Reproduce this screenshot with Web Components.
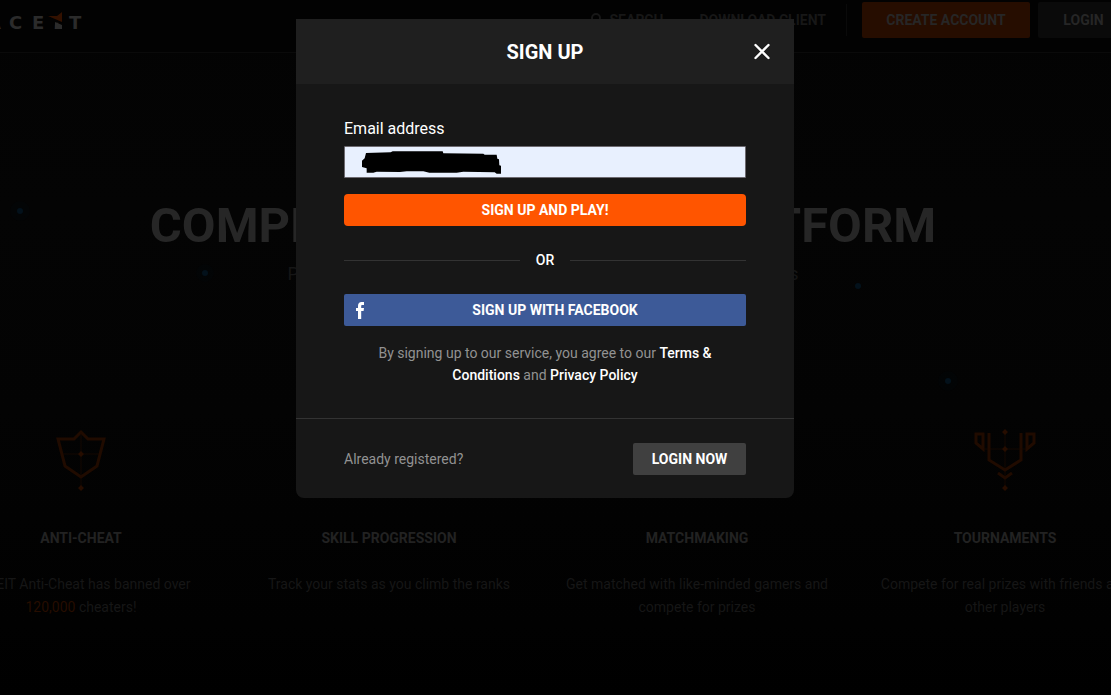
<!DOCTYPE html>
<html lang="en">
<head>
<meta charset="utf-8">
<meta name="viewport" content="width=device-width, initial-scale=1">
<title>FACEIT - Sign up</title>
<style>
  html, body { margin: 0; height: 100%; background: #010101; }
  body { font-family: Roboto, "Liberation Sans", sans-serif; font-size: 14px; color: #fff; overflow: hidden; }
</style>
</head>
<body>
<landing-page>
  <site-header slot="header"></site-header>
  <hero-banner slot="hero" heading="COMPETITIVE GAMING PLATFORM">Play CS:GO, PUBG, Dota 2 and more in leagues and tournaments</hero-banner>
  <feature-card icon="shield" heading="ANTI-CHEAT">FACEIT Anti-Cheat has banned over <em>120,000</em> cheaters!</feature-card>
  <feature-card icon="skill" heading="SKILL PROGRESSION">Track your stats as you climb the ranks</feature-card>
  <feature-card icon="match" heading="MATCHMAKING">Get matched with like-minded gamers and compete for prizes</feature-card>
  <feature-card icon="trophy" heading="TOURNAMENTS">Compete for real prizes with friends and other players</feature-card>
</landing-page>
<modal-dialog heading="SIGN UP">
  <signup-form></signup-form>
  <span slot="note">Already registered?</span>
  <action-button slot="action" kind="grey">LOGIN NOW</action-button>
</modal-dialog>

<script>
const define = (name, render) => customElements.define(name, class extends HTMLElement {
  constructor() {
    super();
    this.attachShadow({ mode: 'open' });
  }
  connectedCallback() {
    const t = document.createElement('template');
    t.innerHTML = '<style>*{box-sizing:border-box}</style>' + render(this);
    this.shadowRoot.replaceChildren(t.content.cloneNode(true));
  }
});

define('action-button', el => `
  <style>
    :host { display: block; }
    button { position: relative; display: block; width: 100%; height: 32px; padding: 0 16px; border: 0;
      border-radius: 2px; background: #404040; color: #fff; font: 700 14px/32px Roboto, "Liberation Sans", sans-serif;
      white-space: nowrap; cursor: pointer; }
    :host([kind=orange]) button { background: #ff5500; border-radius: 4px; }
    :host([kind=facebook]) button { background: #3d5a98; padding: 0 16px 0 36px; }
    :host([kind=dim-orange]) button { background: #260d00; color: #262626; height: 36px; padding: 0 24px; }
    :host([kind=dim]) button { background: #0a0a0a; color: #262626; height: 36px; padding: 0 24px; }
    ::slotted(svg) { position: absolute; left: 12px; top: 8px; }
  </style>
  <button type="button"><slot name="icon"></slot><slot></slot></button>`);

define('site-header', () => `
  <style>
    :host { display: block; border-bottom: 1px solid #0a0a0a; background: #020202; overflow: hidden; }
    header { display: flex; align-items: center; padding: 2px 0 14px; margin: 0 -18px 0 -38px; }
    .logo { display: block; margin-right: auto; }
    nav { display: flex; align-items: center; }
    nav a { display: flex; align-items: center; gap: 8px; margin-right: 36px; color: #171717; font-weight: 700; text-decoration: none; white-space: nowrap; }
    nav a + a { margin-right: 20px; }
    .rule { width: 1px; height: 32px; background: #0a0a0a; margin-right: 15px; }
    .create { width: 168px; margin-right: 8px; }
    .login { width: 91px; }
    svg { display: block; }
  </style>
  <header>
    <a class="logo" href="#" aria-label="FACEIT home">
      <svg width="124" height="36" viewBox="0 0 124 36">
        <text x="4 25 47 70 91 107" y="27" font-family="DejaVu Sans, sans-serif" font-weight="700" font-size="18" fill="#2b2b2b">FACEIT</text>
        <path d="M85 11h16v9l-8 1-1 7h-3V16z" fill="#020202"/>
        <path d="M86 14h9l5-4v10z" fill="#331100"/>
        <path d="M93 20l7 3v4h-7z" fill="#2b2b2b"/>
      </svg>
    </a>
    <nav>
      <a href="#">
        <svg width="12" height="16" viewBox="0 0 12 16" fill="none" stroke="#171717" stroke-width="2"><circle cx="6" cy="6" r="4"/><path d="M8 9l3 5"/></svg>
        SEARCH</a>
      <a href="#">DOWNLOAD CLIENT</a>
    </nav>
    <span class="rule"></span>
    <action-button class="create" kind="dim-orange">CREATE ACCOUNT</action-button>
    <action-button class="login" kind="dim">LOGIN</action-button>
  </header>`);

define('hero-banner', el => `
  <style>
    :host { display: block; text-align: center; }
    h1 { margin: 0 -100px; font-size: 49px; line-height: 56px; font-weight: 700; color: #262626; white-space: nowrap; }
    p { margin: 8px 0 0; font-size: 18px; line-height: 24px; color: #161616; white-space: nowrap; }
  </style>
  <h1>${el.getAttribute('heading')}</h1>
  <p><slot></slot></p>`);

const ICONS = {
  shield: '<path stroke-width="3" d="M9 11h16l7-7 7 7h16l-7 27-16 11-16-11z"/><path stroke-width="1" opacity=".6" d="M32 4v54M14 26h36"/><path fill="#260d00" stroke="none" d="M32 23l3 3-3 3-3-3zM32 57l3 3-3 3-3-3z"/>',
  skill: '<path stroke-width="3" d="M14 40l18-16 18 16M14 54l18-16 18 16"/><path stroke-width="1" d="M32 4v20"/>',
  match: '<circle cx="32" cy="32" r="22" stroke-width="3"/><path stroke-width="1" d="M32 4v56M4 32h56"/>',
  trophy: '<path stroke-width="3" d="M16 5v27l16 10 16-10V5"/><path stroke-width="3" d="M3 6h7v15l-7-6zM61 6h-7v15l7-6z"/><path stroke-width="3" d="M25 45l7 5 7-5"/><path stroke-width="1" opacity=".6" d="M32 4v56M10 21h44"/><path fill="#260d00" stroke="none" d="M32 1l3 3-3 3-3-3zM32 18l3 3-3 3-3-3zM32 57l3 3-3 3-3-3z"/>'
};

define('feature-card', el => `
  <style>
    :host { display: block; text-align: center; padding: 0 20px; }
    svg { display: block; margin: 0 auto; }
    h2 { margin: 36px 0 0; font-size: 14px; line-height: 20px; font-weight: 700; color: #222; }
    p { margin: 25px 0 0; line-height: 23px; color: #161616; }
    ::slotted(em) { font-style: normal; color: #260d00; }
  </style>
  <svg width="64" height="64" viewBox="0 0 64 64" fill="none" stroke="#200b00">${ICONS[el.getAttribute('icon')]}</svg>
  <h2>${el.getAttribute('heading')}</h2>
  <p><slot></slot></p>`);

define('landing-page', () => `
  <style>
    :host { display: block; min-height: 100%; overflow: hidden; position: relative;
      background: linear-gradient(#030303, #040404 30%, #030303 59%, #010101 90%, #000); }
    .content { position: relative; padding: 145px 25px 0 0; }
    .features { display: grid; grid-template-columns: repeat(4, 308px); justify-content: center; margin-top: 142px; }
    .sparks { position: absolute; inset: 0; width: 100%; height: 100%; }
  </style>
  <svg class="sparks" aria-hidden="true">
    <g fill="#07233a" opacity=".06"><circle cx="20" cy="211" r="10"/><circle cx="205" cy="273" r="9"/><circle cx="948" cy="381" r="10"/></g>
    <g fill="#03111b"><circle cx="20" cy="211" r="3"/><circle cx="205" cy="273" r="3"/><circle cx="858" cy="286" r="3"/><circle cx="948" cy="381" r="3"/></g>
  </svg>
  <slot name="header"></slot>
  <main class="content">
    <slot name="hero"></slot>
    <div class="features"><slot></slot></div>
  </main>`);

define('modal-dialog', el => `
  <style>
    :host { position: fixed; inset: 0; display: flex; justify-content: center; align-items: flex-start; padding: 19px 21px 19px 0; }
    section { width: 498px; background: #171717; border-radius: 0 0 8px 8px; overflow: hidden; }
    header { display: grid; grid-template-columns: 1fr auto 1fr; align-items: center; height: 65px; padding: 0 20px; background: #1f1f1f; }
    h2 { grid-column: 2; margin: 0; font-size: 20px; line-height: 24px; font-weight: 700; }
    .close { justify-self: end; width: 24px; height: 24px; padding: 0; border: 0; background: none; color: #fff; }
    svg { display: block; }
    .body { padding: 32px 48px; }
    footer { display: flex; justify-content: space-between; align-items: center; height: 80px; padding: 0 48px; border-top: 1px solid #333; color: #929292; }
    ::slotted(action-button) { width: 113px; }
  </style>
  <section role="dialog" aria-labelledby="title">
    <header>
      <h2 id="title">${el.getAttribute('heading')}</h2>
      <button class="close" type="button" aria-label="Close">
        <svg width="24" height="24" viewBox="0 0 24 24" fill="none" stroke="currentColor" stroke-width="2.4" stroke-linecap="round"><path d="M5.500 5l13 13M18.500 5l-13 13"/></svg>
      </button>
    </header>
    <div class="body"><slot></slot></div>
    <footer><slot name="note"></slot><slot name="action"></slot></footer>
  </section>`);

define('signup-form', () => `
  <style>
    :host { display: block; }
    form { display: flex; flex-direction: column; }
    label { font-size: 16px; line-height: 26px; }
    .field { position: relative; margin: 4px 0 16px; }
    input { display: block; width: 100%; height: 32px; padding: 0 16px; border: 1px solid #6d6a70; border-radius: 1px;
      background: #e8f0fe; color: #000; font: 14px Roboto, "Liberation Sans", sans-serif; outline: 0; }
    .redaction { position: absolute; left: 0; top: 0; pointer-events: none; }
    .or { display: flex; align-items: center; gap: 16px; margin: 24px 0; line-height: 20px; font-weight: 500; }
    .or::before, .or::after { content: ""; flex: 1; height: 1px; background: #333; }
    p { margin: 16px 24px 0; text-align: center; line-height: 22px; color: #929292; }
    a { color: #fff; text-decoration: none; font-weight: 500; }
  </style>
  <form>
    <label for="email">Email address</label>
    <div class="field">
      <input id="email" type="email" autocomplete="email">
      <svg class="redaction" width="402" height="32" viewBox="162 408 1206 96" aria-hidden="true"><path d="M228 429L302 427L308 424H458L460 430L580 431L584 434L620 434L622 446L627 448L628 466L633 467V491H620L614 487L520 485L500 488H418L400 484H350L330 486L260 485L250 488H230V475L216 471V452L224 445Z"/></svg>
    </div>
    <action-button kind="orange">SIGN UP AND PLAY!</action-button>
    <div class="or">OR</div>
    <action-button kind="facebook"><svg slot="icon" width="9" height="17" viewBox="0 0 9 17" fill="#fff" aria-hidden="true"><path d="M2 17V9H0V6h2V4c0-2.600 1.400-4 3.600-4H8v3H6.500C5.400 3 5.200 3.500 5.200 4.300V6H8l-.4 3H5.200v8z"/></svg>SIGN UP WITH FACEBOOK</action-button>
    <p>By signing up to our service, you agree to our <a href="#">Terms &amp; Conditions</a> and <a href="#">Privacy Policy</a></p>
  </form>`);
</script>
</body>
</html>
